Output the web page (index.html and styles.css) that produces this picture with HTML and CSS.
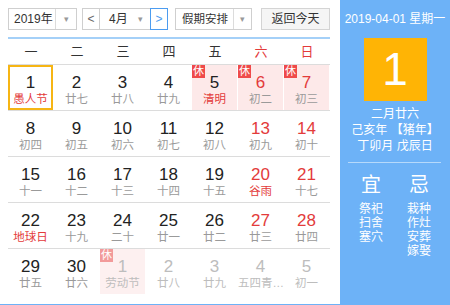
FILE: index.html
```html
<!DOCTYPE html>
<html lang="zh">
<head>
<meta charset="utf-8">
<link rel="stylesheet" href="styles.css">
</head>
<body>
<div class="cal">
  <div class="main">
    <div class="toolbar">
      <div class="sel sel-year"><span class="sel-text">2019年</span><span class="sel-arrow">▾</span></div>
      <div class="month-group">
        <div class="nav">&lt;</div>
        <div class="sel sel-month"><span class="sel-text">4月</span><span class="sel-arrow plain">▾</span></div>
        <div class="nav nav-active">&gt;</div>
      </div>
      <div class="sel sel-holiday"><span class="sel-text">假期安排</span><span class="sel-arrow">▾</span></div>
      <div class="btn-today">返回今天</div>
    </div>
    <div class="grid">
      <div class="week">
        <span>一</span><span>二</span><span>三</span><span>四</span><span>五</span><span class="red">六</span><span class="red">日</span>
      </div>
      <div class="row">
        <div class="cell today"><b>1</b><i class="fest">愚人节</i></div>
        <div class="cell"><b>2</b><i>廿七</i></div>
        <div class="cell"><b>3</b><i>廿八</i></div>
        <div class="cell"><b>4</b><i>廿九</i></div>
        <div class="cell rest"><em class="badge">休</em><b>5</b><i class="fest">清明</i></div>
        <div class="cell rest wk"><em class="badge">休</em><b>6</b><i>初二</i></div>
        <div class="cell rest wk"><em class="badge">休</em><b>7</b><i>初三</i></div>
      </div>
      <div class="row">
        <div class="cell"><b>8</b><i>初四</i></div>
        <div class="cell"><b>9</b><i>初五</i></div>
        <div class="cell"><b>10</b><i>初六</i></div>
        <div class="cell"><b>11</b><i>初七</i></div>
        <div class="cell"><b>12</b><i>初八</i></div>
        <div class="cell wk"><b>13</b><i>初九</i></div>
        <div class="cell wk"><b>14</b><i>初十</i></div>
      </div>
      <div class="row">
        <div class="cell"><b>15</b><i>十一</i></div>
        <div class="cell"><b>16</b><i>十二</i></div>
        <div class="cell"><b>17</b><i>十三</i></div>
        <div class="cell"><b>18</b><i>十四</i></div>
        <div class="cell"><b>19</b><i>十五</i></div>
        <div class="cell wk"><b>20</b><i class="fest">谷雨</i></div>
        <div class="cell wk"><b>21</b><i>十七</i></div>
      </div>
      <div class="row">
        <div class="cell"><b>22</b><i class="fest">地球日</i></div>
        <div class="cell"><b>23</b><i>十九</i></div>
        <div class="cell"><b>24</b><i>二十</i></div>
        <div class="cell"><b>25</b><i>廿一</i></div>
        <div class="cell"><b>26</b><i>廿二</i></div>
        <div class="cell wk"><b>27</b><i>廿三</i></div>
        <div class="cell wk"><b>28</b><i>廿四</i></div>
      </div>
      <div class="row last">
        <div class="cell"><b>29</b><i>廿五</i></div>
        <div class="cell"><b>30</b><i>廿六</i></div>
        <div class="cell other rest"><em class="badge">休</em><b>1</b><i>劳动节</i></div>
        <div class="cell other"><b>2</b><i>廿八</i></div>
        <div class="cell other"><b>3</b><i>廿九</i></div>
        <div class="cell other"><b>4</b><i>五四青…</i></div>
        <div class="cell other"><b>5</b><i>初一</i></div>
      </div>
    </div>
  </div>
  <div class="side">
    <div class="side-date">2019-04-01 星期一</div>
    <div class="big-day">1</div>
    <div class="lunar">
      <div>二月廿六</div>
      <div>己亥年 【猪年】</div>
      <div>丁卯月 戊辰日</div>
    </div>
    <div class="divider"></div>
    <div class="yiji">
      <div class="col">
        <div class="yj-title">宜</div>
        <div>祭祀</div><div>扫舍</div><div>塞穴</div>
      </div>
      <div class="col">
        <div class="yj-title">忌</div>
        <div>栽种</div><div>作灶</div><div>安葬</div><div>嫁娶</div>
      </div>
    </div>
  </div>
</div>
</body>
</html>
```

FILE: styles.css
```css
* { box-sizing: border-box; }
html, body { margin: 0; padding: 0; background: #fff; }
body {
  font-family: "Liberation Sans", "Noto Sans CJK SC", sans-serif;
  color: #333;
}
.cal {
  display: flex;
  width: 450px;
  height: 305px;
}
.main {
  width: 340px;
  height: 305px;
  padding: 0 10px 0 8px;
  border-bottom: 1px solid #6db2f7;
}
.toolbar {
  display: flex;
  align-items: center;
  height: 37px;
}
.sel {
  display: flex;
  height: 22px;
  border: 1px solid #cfcfcf;
  background: #fff;
  font-size: 12px;
  line-height: 20px;
  white-space: nowrap;
}
.sel-text { color: #333; flex: none; }
.sel-arrow {
  flex: none;
  width: 21px;
  text-align: center;
  color: #999;
  font-size: 9px;
  border-left: 1px solid #dcdcdc;
}
.sel-arrow.plain { border-left: none; }
.sel-year { width: 69px; }
.sel-year .sel-text { width: 46px; padding-left: 5px; }
.month-group { display: flex; margin-left: 5px; }
.nav {
  width: 18px;
  height: 22px;
  border: 1px solid #cfcfcf;
  font-size: 12px;
  line-height: 20px;
  text-align: center;
  color: #666;
  background: #fff;
}
.nav-active { border-color: #4c9cf0; color: #4c9cf0; }
.sel-month { width: 50px; border-left: none; border-right: none; }
.sel-month .sel-text { width: 31px; padding-left: 9px; }
.sel-month .sel-arrow { width: 18px; }
.sel-holiday { width: 77px; margin-left: 7px; }
.sel-holiday .sel-text { width: 57px; padding-left: 6px; font-size: 11.5px; }
.sel-holiday .sel-arrow { width: 18px; }
.btn-today {
  margin-left: 9px;
  width: 69px;
  height: 22px;
  border: 1px solid #d4d4d4;
  background: #f5f5f5;
  font-size: 12px;
  line-height: 20px;
  text-align: center;
  color: #333;
  white-space: nowrap;
}
.grid {
  border-top: 2px solid #a4d0f8;
}
.week {
  display: grid;
  grid-template-columns: repeat(7, 46px);
  height: 26px;
  border-bottom: 1px solid #dcdcdc;
  font-size: 13px;
  line-height: 25px;
  text-align: center;
}
.red { color: #e33b3b; }
.row {
  display: grid;
  grid-template-columns: repeat(7, 46px);
  height: 46px;
  border-bottom: 1px solid #dcdcdc;
}
.row.last { border-bottom: none; }
.cell {
  position: relative;
  margin-right: 1px;
  height: 45px;
  text-align: center;
  padding-top: 8px;
}
.cell b {
  display: block;
  font-weight: normal;
  font-size: 17px;
  line-height: 19px;
  color: #222;
}
.cell i {
  display: block;
  font-style: normal;
  font-size: 11.5px;
  line-height: 14px;
  color: #9a9a9a;
  white-space: nowrap;
}
.cell i.fest { color: #e33b3b; }
.cell.wk b { color: #e33b3b; }
.cell.rest { background: #fde9e9; }
.cell.today { border: 2px solid #f6b514; padding-top: 6px; }
.badge {
  position: absolute;
  left: 0;
  top: 0;
  width: 13px;
  height: 13px;
  background: #ef4a4a;
  color: #fff;
  font-style: normal;
  font-size: 11px;
  line-height: 13px;
  text-align: center;
}
.cell.other b, .cell.other i { color: #bdbdbd; }
.cell.other.rest { background: #fdf0f0; }
.cell.other .badge { background: #f29a9a; }
.side {
  width: 110px;
  height: 305px;
  background: #6db2f7;
  color: #fff;
}
.side-date {
  padding-top: 11px;
  font-size: 12px;
  line-height: 16px;
  text-align: center;
  white-space: nowrap;
}
.big-day {
  width: 63px;
  height: 63px;
  margin: 11px auto 0;
  background: #ffb405;
  font-size: 46px;
  line-height: 63px;
  text-align: center;
}
.lunar {
  margin-top: 5px;
  font-size: 12px;
  line-height: 16px;
  text-align: center;
}
.divider {
  margin: 8px 9px 0 8px;
  height: 1px;
  background: rgba(255,255,255,0.5);
}
.yiji {
  display: flex;
  justify-content: center;
  margin-top: 9px;
  font-size: 12px;
  line-height: 14px;
  text-align: center;
}
.col { width: 48px; }
.yj-title {
  font-size: 20px;
  line-height: 26px;
  margin-bottom: 4px;
}
```
